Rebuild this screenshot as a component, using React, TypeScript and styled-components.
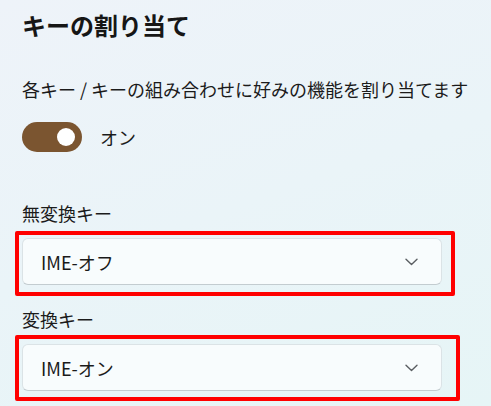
import React from "react";
import styled, { createGlobalStyle } from "styled-components";

const GlobalStyle = createGlobalStyle`
  html, body {
    margin: 0;
    padding: 0;
  }
  body {
    width: 491px;
    height: 406px;
    overflow: hidden;
    font-family: "Noto Sans CJK JP", "Noto Sans", sans-serif;
    color: #1b1b1b;
    background: linear-gradient(160deg, #eef3f9 0%, #eaf4f8 50%, #e6f5f6 100%);
  }
`;

const Page = styled.div`
  display: flex;
  flex-direction: column;
  padding: 9px 0 0 22px;
  width: 491px;
  height: 406px;
  box-sizing: border-box;
`;

const Title = styled.h1`
  margin: 0;
  font-size: 24px;
  line-height: 32px;
  font-weight: 700;
  color: #161616;
`;

const Description = styled.p`
  margin: 34px 0 0;
  font-size: 18px;
  line-height: 28px;
  font-weight: 400;
  white-space: nowrap;
`;

const ToggleRow = styled.div`
  display: flex;
  align-items: center;
  gap: 18px;
  margin-top: 19px;
  height: 30px;
`;

const Switch = styled.div<{ $on: boolean }>`
  width: 60px;
  height: 30px;
  border-radius: 15px;
  box-sizing: border-box;
  background: ${(p) => (p.$on ? "#7b5530" : "transparent")};
  display: flex;
  align-items: center;
  justify-content: ${(p) => (p.$on ? "flex-end" : "flex-start")};
  padding: 0 7px;
`;

const Knob = styled.span`
  width: 18px;
  height: 18px;
  border-radius: 50%;
  background: #ffffff;
`;

const ToggleLabel = styled.span`
  font-size: 18px;
  line-height: 26px;
`;

const Field = styled.div<{ $top: number }>`
  display: flex;
  flex-direction: column;
  gap: 12px;
  margin-top: ${(p) => p.$top}px;
`;

const FieldLabel = styled.label`
  font-size: 18px;
  line-height: 26px;
`;

const Highlight = styled.div<{ $l: number; $t: number; $r: number; $b: number }>`
  position: relative;
  width: 420px;
  &::after {
    content: "";
    position: absolute;
    left: ${(p) => -p.$l}px;
    top: ${(p) => -p.$t}px;
    right: ${(p) => -p.$r}px;
    bottom: ${(p) => -p.$b}px;
    border: 4px solid #ff0000;
    border-radius: 2px;
    pointer-events: none;
  }
`;

const Select = styled.div`
  height: 47px;
  box-sizing: border-box;
  display: flex;
  align-items: center;
  justify-content: space-between;
  padding: 0 23px 0 18px;
  background: #f8fcfd;
  border: 1px solid #dbe3e6;
  border-bottom-color: #c3ccd0;
  border-radius: 6px;
  font-size: 18px;
  color: #1a1a1a;
`;

const Chevron = () => (
  <svg width="13" height="8" viewBox="0 0 13 8" fill="none">
    <path d="M1 1.2 L6.5 6.4 L12 1.2" stroke="#5a5e62" strokeWidth="1.4" strokeLinecap="round" strokeLinejoin="round" />
  </svg>
);

export default function App() {
  return (
    <>
      <GlobalStyle />
      <Page>
        <Title>キーの割り当て</Title>
        <Description>各キー / キーの組み合わせに好みの機能を割り当てます</Description>
        <ToggleRow>
          <Switch $on>
            <Knob />
          </Switch>
          <ToggleLabel>オン</ToggleLabel>
        </ToggleRow>
        <Field $top={48}>
          <FieldLabel>無変換キー</FieldLabel>
          <Highlight $l={7} $t={7} $r={13} $b={11}>
            <Select>
              <span>IME-オフ</span>
              <Chevron />
            </Select>
          </Highlight>
        </Field>
        <Field $top={21}>
          <FieldLabel>変換キー</FieldLabel>
          <Highlight $l={7} $t={9} $r={18} $b={10}>
            <Select>
              <span>IME-オン</span>
              <Chevron />
            </Select>
          </Highlight>
        </Field>
      </Page>
    </>
  );
}
